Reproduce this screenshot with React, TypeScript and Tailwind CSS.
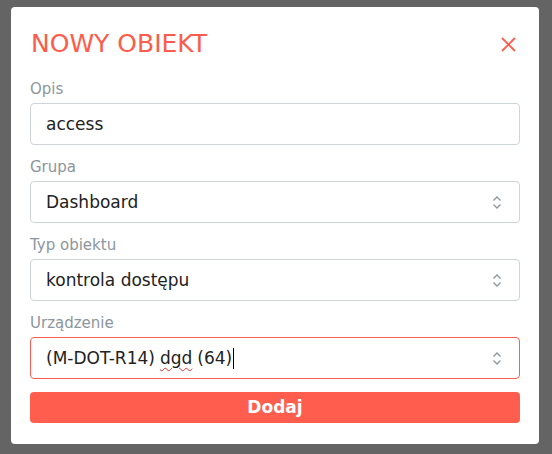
import React from 'react';

const font = { fontFamily: '"DejaVu Sans", "Open Sans", sans-serif' };

function Chevrons() {
  return (
    <svg width="10" height="15" viewBox="0 0 10 15" fill="none" stroke="#8c959d" strokeWidth="1.3">
      <path d="M1.5 5.5 L5 2 L8.5 5.5" />
      <path d="M1.5 9.5 L5 13 L8.5 9.5" />
    </svg>
  );
}

function Field({ label, children, active }: { label: string; children: React.ReactNode; active?: boolean }) {
  return (
    <div className="flex flex-col">
      <div className="h-[22px] mb-[3px] text-[15px] leading-[22px] text-[#8c959d]">{label}</div>
      <div
        className={
          'h-[42px] rounded-[4px] border flex items-center pl-[15px] pr-[17px] pt-[1px] text-[17px] text-[#222] ' +
          (active ? 'border-[#ff5e4e]' : 'border-[#cfd4d9]')
        }
      >
        {children}
      </div>
    </div>
  );
}

export default function App() {
  return (
    <div className="min-h-screen bg-[#646464] pt-[7px] pl-[11px]" style={font}>
      <div className="w-[528px] h-[437px] bg-white rounded-[4px] px-[19px] pt-[20px] pb-[20px] flex flex-col">
        <div className="h-[34px] flex items-center justify-between pl-[1px]">
          <h1 className="text-[25px] text-[#fd5c4c] font-normal">NOWY OBIEKT</h1>
          <svg width="15" height="15" viewBox="0 0 15 15" className="mr-[4px]" stroke="#fd5c4c" strokeWidth="1.8">
            <path d="M1 1 L14 14 M14 1 L1 14" />
          </svg>
        </div>
        <div className="mt-[17px] flex flex-col gap-[11px]">
          <Field label="Opis">
            <span>access</span>
          </Field>
          <Field label="Grupa">
            <span className="flex-1">Dashboard</span>
            <Chevrons />
          </Field>
          <Field label="Typ obiektu">
            <span className="flex-1">kontrola dostępu</span>
            <Chevrons />
          </Field>
          <Field label="Urządzenie" active>
            <span className="flex-1 flex items-center">
              (M-DOT-R14){' '}
              <span className="mx-[5px] underline decoration-wavy decoration-[#e03030] decoration-1 underline-offset-[3px]">dgd</span>
              (64)
              <span className="inline-block w-[1px] h-[21px] bg-black ml-[1px]" />
            </span>
            <Chevrons />
          </Field>
        </div>
        <button className="mt-[13px] h-[31px] rounded-[4px] bg-[#ff5e4e] text-white font-bold text-[17px]">Dodaj</button>
      </div>
    </div>
  );
}
